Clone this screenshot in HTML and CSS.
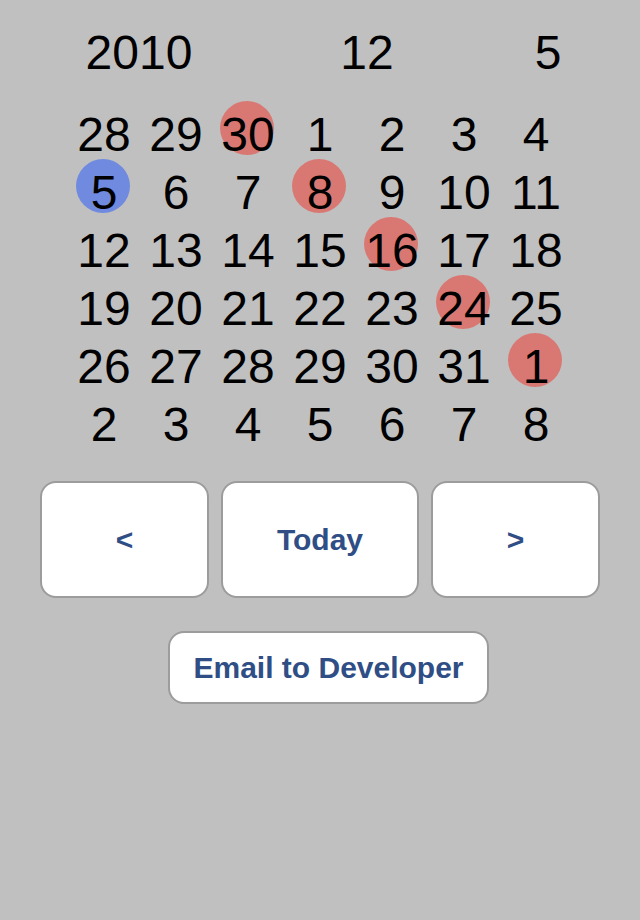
FILE: index.html
```html
<!DOCTYPE html>
<html lang="en">
<head>
    <meta charset="UTF-8">
    <meta name="viewport" content="width=device-width, initial-scale=1.0">
    <title>Calendar</title>
    <link rel="stylesheet" href="styles.css">
</head>
<body>
    <div class="screen">
        <div class="date-head">
            <span>2010</span>
            <span>12</span>
            <span>5</span>
        </div>

        <div class="month-grid">
            <span class="day">28</span>
            <span class="day">29</span>
            <span class="day mark">30</span>
            <span class="day">1</span>
            <span class="day">2</span>
            <span class="day">3</span>
            <span class="day">4</span>

            <span class="day today">5</span>
            <span class="day">6</span>
            <span class="day">7</span>
            <span class="day mark">8</span>
            <span class="day">9</span>
            <span class="day">10</span>
            <span class="day">11</span>

            <span class="day">12</span>
            <span class="day">13</span>
            <span class="day">14</span>
            <span class="day">15</span>
            <span class="day mark">16</span>
            <span class="day">17</span>
            <span class="day">18</span>

            <span class="day">19</span>
            <span class="day">20</span>
            <span class="day">21</span>
            <span class="day">22</span>
            <span class="day">23</span>
            <span class="day mark">24</span>
            <span class="day">25</span>

            <span class="day">26</span>
            <span class="day">27</span>
            <span class="day">28</span>
            <span class="day">29</span>
            <span class="day">30</span>
            <span class="day">31</span>
            <span class="day mark">1</span>

            <span class="day">2</span>
            <span class="day">3</span>
            <span class="day">4</span>
            <span class="day">5</span>
            <span class="day">6</span>
            <span class="day">7</span>
            <span class="day">8</span>
        </div>

        <div class="nav-row">
            <button type="button" class="btn btn-side">&lt;</button>
            <button type="button" class="btn btn-today">Today</button>
            <button type="button" class="btn btn-side">&gt;</button>
        </div>

        <button type="button" class="btn btn-email">Email to Developer</button>
    </div>
</body>
</html>
```

FILE: styles.css
```css
body {
    margin: 0;
    padding: 0;
    background-color: #c0c0c0;
    font-family: 'Liberation Sans', Arial, sans-serif;
}

.screen {
    width: 640px;
    height: 920px;
    padding-top: 24px;
    box-sizing: border-box;
}

.date-head {
    display: grid;
    grid-template-columns: 278px 178px 184px;
    font-size: 48px;
    line-height: 58px;
    text-align: center;
    color: #000;
}

.month-grid {
    display: grid;
    grid-template-columns: repeat(7, 72px);
    grid-auto-rows: 58px;
    margin: 24px 0 0 68px;
    font-size: 48px;
    line-height: 58px;
    color: #000;
}

.day {
    position: relative;
    isolation: isolate;
    text-align: center;
}

.mark::before,
.today::before {
    content: '';
    position: absolute;
    z-index: -1;
    top: -5px;
    left: 8px;
    width: 54px;
    height: 54px;
    border-radius: 50%;
    background-color: #d97872;
}

.today::before {
    background-color: #6f8ade;
}

.nav-row {
    display: flex;
    gap: 12px;
    margin: 27px 0 0 40px;
}

.btn {
    display: block;
    background-color: #ffffff;
    border: 2px solid #9c9c9c;
    border-radius: 16px;
    box-sizing: border-box;
    font-family: 'Liberation Sans', Arial, sans-serif;
    font-weight: bold;
    font-size: 30px;
    color: #2f4e85;
    padding: 0;
}

.btn-side {
    width: 169px;
    height: 117px;
}

.btn-today {
    width: 198px;
    height: 117px;
}

.btn-email {
    width: 321px;
    height: 73px;
    margin: 33px 0 0 168px;
}
```
